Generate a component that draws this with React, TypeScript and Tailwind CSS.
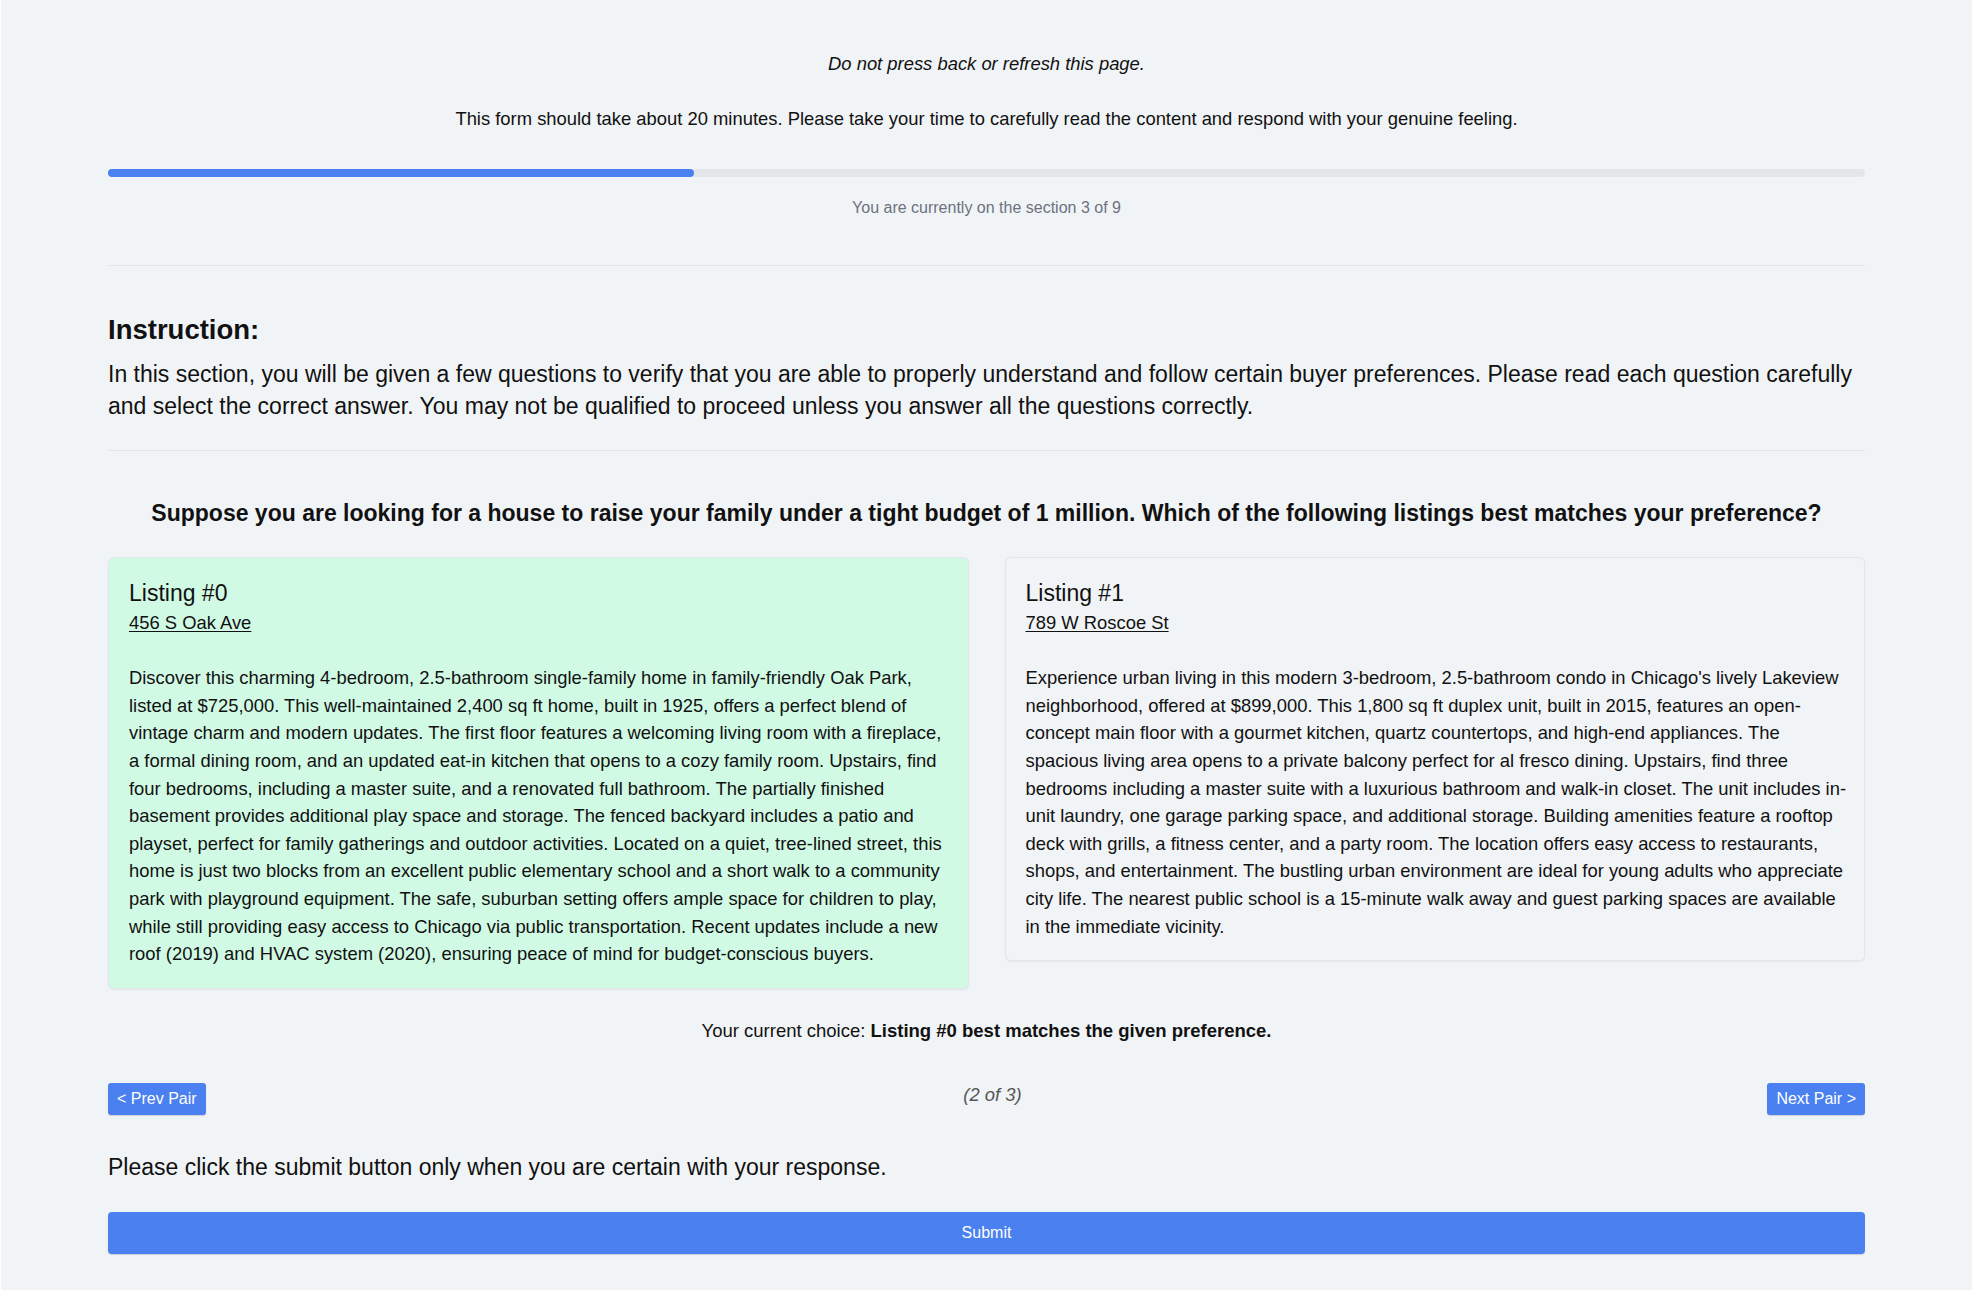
import React from "react";

const listings = [
  {
    title: "Listing #0",
    address: "456 S Oak Ave",
    selected: true,
    text: "Discover this charming 4-bedroom, 2.5-bathroom single-family home in family-friendly Oak Park, listed at $725,000. This well-maintained 2,400 sq ft home, built in 1925, offers a perfect blend of vintage charm and modern updates. The first floor features a welcoming living room with a fireplace, a formal dining room, and an updated eat-in kitchen that opens to a cozy family room. Upstairs, find four bedrooms, including a master suite, and a renovated full bathroom. The partially finished basement provides additional play space and storage. The fenced backyard includes a patio and playset, perfect for family gatherings and outdoor activities. Located on a quiet, tree-lined street, this home is just two blocks from an excellent public elementary school and a short walk to a community park with playground equipment. The safe, suburban setting offers ample space for children to play, while still providing easy access to Chicago via public transportation. Recent updates include a new roof (2019) and HVAC system (2020), ensuring peace of mind for budget-conscious buyers.",
  },
  {
    title: "Listing #1",
    address: "789 W Roscoe St",
    selected: false,
    text: "Experience urban living in this modern 3-bedroom, 2.5-bathroom condo in Chicago's lively Lakeview neighborhood, offered at $899,000. This 1,800 sq ft duplex unit, built in 2015, features an open-concept main floor with a gourmet kitchen, quartz countertops, and high-end appliances. The spacious living area opens to a private balcony perfect for al fresco dining. Upstairs, find three bedrooms including a master suite with a luxurious bathroom and walk-in closet. The unit includes in-unit laundry, one garage parking space, and additional storage. Building amenities feature a rooftop deck with grills, a fitness center, and a party room. The location offers easy access to restaurants, shops, and entertainment. The bustling urban environment are ideal for young adults who appreciate city life. The nearest public school is a 15-minute walk away and guest parking spaces are available in the immediate vicinity.",
  },
];

export default function App() {
  return (
    <div
      className="min-h-[1290px] w-full bg-[#f1f4f6] text-[#111] border-l border-white"
      style={{ fontFamily: '"Liberation Sans", Arial, Helvetica, sans-serif' }}
    >
      <div className="mx-auto w-[1757px] pt-[50px] pb-[36px]">
        <p className="text-center text-[18.4px] leading-[27px] italic">
          Do not press back or refresh this page.
        </p>
        <p className="mt-[28px] text-center text-[18.4px] leading-[27px]">
          This form should take about 20 minutes. Please take your time to carefully read the content and respond with your genuine feeling.
        </p>

        <div className="mt-[37px] h-2 w-full rounded-full bg-[#e4e6ea]">
          <div className="h-2 w-1/3 rounded-full bg-[#4a80f0]" />
        </div>
        <p className="mt-[19px] text-center text-[16px] leading-[24px] text-[#6b7280]">
          You are currently on the section 3 of 9
        </p>

        <hr className="mt-[44.8px] border-0 border-t border-[#e2e5e9]" />

        <h2 className="mt-[47.2px] text-[27.5px] font-bold leading-[33px]">Instruction:</h2>
        <p className="mt-[13.3px] text-[23px] leading-[31.4px]">
          In this section, you will be given a few questions to verify that you are able to properly understand and follow certain buyer preferences. Please read each question carefully and select the correct answer. You may not be qualified to proceed unless you answer all the questions correctly.
        </p>

        <hr className="mt-[27.7px] border-0 border-t border-[#e2e5e9]" />

        <p className="mt-[47px] text-center text-[23px] font-bold leading-[30px]">
          Suppose you are looking for a house to raise your family under a tight budget of 1 million. Which of the following listings best matches your preference?
        </p>

        <div className="mt-[29.5px] grid grid-cols-2 items-start gap-9">
          {listings.map((l) => (
            <div
              key={l.title}
              className={`rounded-[6px] border border-[#e3e6ea] py-5 pl-5 pr-[16px] shadow-[0_1px_2px_rgba(0,0,0,0.06)] ${
                l.selected ? "bg-[#d1fae5]" : "bg-[#f1f4f6]"
              }`}
            >
              <div className="text-[23px] leading-[31px]">{l.title}</div>
              <div className="text-[18.4px] leading-[27px] underline underline-offset-2">{l.address}</div>
              <p className="mt-[28px] text-[18.4px] leading-[27.6px]">{l.text}</p>
            </div>
          ))}
        </div>

        <p className="mt-[28px] text-center text-[18.5px] leading-[27px]">
          Your current choice: <span className="font-bold">Listing #0 best matches the given preference.</span>
        </p>

        <div className="mt-[39.5px] flex items-start justify-between">
          <button className="h-[32px] rounded-[3px] bg-[#4a80f0] px-[9px] text-[16px] leading-[32px] text-white shadow-[0_1px_1px_rgba(0,0,0,0.15)]">
            &lt; Prev Pair
          </button>
          <span className="pl-3 text-[18.4px] leading-[24px] italic text-[#555]">(2 of 3)</span>
          <button className="h-[32px] rounded-[3px] bg-[#4a80f0] px-[9px] text-[16px] leading-[32px] text-white shadow-[0_1px_1px_rgba(0,0,0,0.15)]">
            Next Pair &gt;
          </button>
        </div>

        <p className="mt-[37px] text-[23px] leading-[31px]">
          Please click the submit button only when you are certain with your response.
        </p>

        <button className="mt-[28.5px] block h-[42px] w-full rounded-[4px] bg-[#4a80f0] text-[16px] text-white shadow-[0_1px_1px_rgba(0,0,0,0.15)]">
          Submit
        </button>
      </div>
    </div>
  );
}
